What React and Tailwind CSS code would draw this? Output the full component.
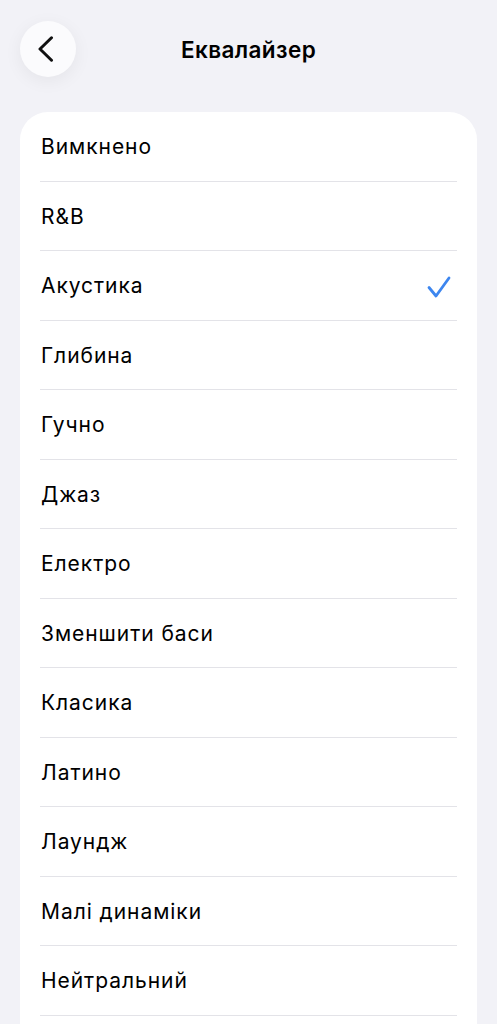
import { useState } from 'react';

const PRESETS = [
  'Вимкнено',
  'R&B',
  'Акустика',
  'Глибина',
  'Гучно',
  'Джаз',
  'Електро',
  'Зменшити баси',
  'Класика',
  'Латино',
  'Лаундж',
  'Малі динаміки',
  'Нейтральний',
];

const App = () => {
  const [selected, setSelected] = useState('Акустика');

  return (
    <div className="min-h-screen bg-[#f2f2f7] font-['Inter','Noto_Sans',sans-serif] text-black">
      {/* Header */}
      <div className="relative flex items-center justify-center h-[98px]">
        <button className="absolute left-[20px] top-[21px] h-[56px] w-[56px] rounded-full bg-[#fbfbfd] shadow-[0_4px_18px_rgba(0,0,0,0.06)] flex items-center justify-center">
          <svg width="22" height="26" viewBox="0 0 22 26" fill="none">
            <path d="M14.5 1.8L3 13L14.5 24.2" stroke="#111" strokeWidth="3" strokeLinecap="round" strokeLinejoin="round" />
          </svg>
        </button>
        <h1 className="text-[22.5px] font-semibold tracking-[0.4px] mt-[2px]">Еквалайзер</h1>
      </div>

      {/* List */}
      <div className="mx-[20px] mt-[14px] bg-white rounded-[28px] overflow-hidden">
        {PRESETS.map((name) => (
          <div
            key={name}
            onClick={() => setSelected(name)}
            className="mx-[20px] h-[69.5px] flex items-center justify-between border-b border-[#e3e3e8]"
          >
            <span className="pl-[1px] text-[21px] tracking-[0.95px] mt-[1px]">{name}</span>
            {selected === name && (
              <svg width="24" height="22" viewBox="0 0 24 22" fill="none" className="mr-[6px] mt-[4px]">
                <path d="M2 11.5L9 20L22 2" stroke="#3d86ef" strokeWidth="2.8" strokeLinecap="round" strokeLinejoin="round" />
              </svg>
            )}
          </div>
        ))}
        <div className="h-[40px]" />
      </div>
    </div>
  );
};

export default App;
